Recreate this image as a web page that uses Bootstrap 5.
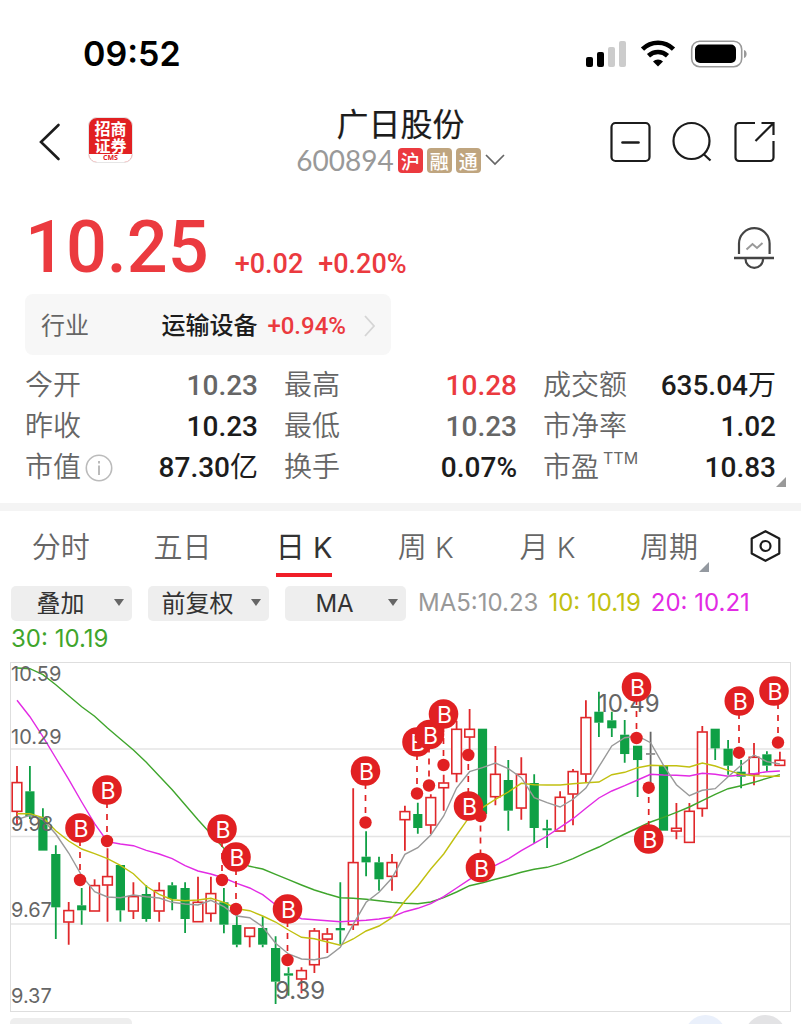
<!DOCTYPE html>
<html lang="zh-CN">
<head>
<meta charset="utf-8">
<meta name="viewport" content="width=device-width, initial-scale=1">
<title>广日股份 600894</title>
<link href="https://cdn.jsdelivr.net/npm/bootstrap@5.3.0/dist/css/bootstrap.min.css" rel="stylesheet">
<style>
:root { --up: #eb3a3f; --ink: #1c1c1c; --dim: #666; --brand: #e12022; }
body { font-family: Roboto, "Noto Sans CJK SC", sans-serif; color: var(--ink); background: #fff; }
svg { display: block; }
.ui { font-family: Inter, "Noto Sans CJK SC", sans-serif; }
.up { color: var(--up); }
.dim { color: var(--dim); }
.icon-btn { border: 0; background: none; padding: 0; color: var(--ink); }

.status { padding: 34px 54px 0 83px; height: 104px; }
.status-icons { height: 40px; }
.clock { font-size: 34px; line-height: 40px; font-weight: 600; color: #000; }

.topbar { display: grid; grid-template-columns: 1fr auto 1fr; padding: 0 26px 0 38px; height: 76px; }
.topbar-title { margin-right: 12px; }
.broker { width: 45px; height: 46px; margin: -4px 0 0 2px; border-radius: 9px; background: var(--brand); border: 1px solid #e6e6e6; overflow: hidden; color: #fff; }
.broker-name { font: 700 16px/17px "Noto Sans CJK SC", sans-serif; padding-top: 2px; }
.broker-code { background: #fff; color: var(--brand); font: 700 7px/8px "Open Sans", sans-serif; }
.stock-name { font: 400 32px/36px "Noto Sans CJK SC", sans-serif; -webkit-text-stroke: .2px; }
.stock-code { font: 400 28px/40px Lato, sans-serif; color: #999; }
.tag { width: 25px; height: 25px; border-radius: 4px; font: 500 19px/25px "Noto Sans CJK SC", sans-serif; color: #fff; background: #bfa57f; text-align: center; }
.tag-hu { background: var(--up); }
.tools { gap: 21px; }

.quote { padding: 22px 26px 0 25px; height: 114px; }
.price { font-size: 72px; line-height: 90px; font-weight: 500; }
.change { font-size: 27px; line-height: 36px; font-weight: 500; margin: 32px 0 0 26px; gap: 15px; }
.industry { width: 366px; height: 61px; margin-left: 25px; padding: 2px 15px 0 16px; border-radius: 8px; background: #f7f7f7; font-size: 24px; color: inherit; }
.industry-name { font-weight: 500; }
.industry-rate { font-weight: 500; margin: 0 18px 0 10px; }

.stats { display: grid; grid-template-columns: repeat(3, 1fr); column-gap: 26px; padding: 10px 25px 15px; font-size: 28px; line-height: 41px; }
.stats dt { font-weight: 350; color: var(--dim); }
.stats dd { margin: 0; font-weight: 500; }
.stats dd i { font-style: normal; font-weight: 400; }
.stats sup { font: 400 16px/20px Inter, sans-serif; top: -13px; margin-left: 4px; }
.corner { width: 0; height: 0; border-left: 10px solid transparent; border-bottom: 10px solid #999; }
.stats-more { position: absolute; right: 15px; bottom: 16px; }
.divider { height: 8px; background: #f4f4f4; }

.periods { height: 66px; font-size: 29px; }
.periods a { color: var(--dim); text-decoration: none; line-height: 73px; white-space: nowrap; font-weight: 350; }
.periods a.active { color: #333; font-weight: 400; }
.periods a.active span { border-bottom: 4px solid #f01e28; }
.periods span { display: block; height: 66px; }
.period-more { position: absolute; right: -11px; bottom: 5px; border-bottom-color: #9499a0; }
.gear { padding: 3px 20px 0; }

.legend { padding: 8px 11px 0; font-size: 24px; font-weight: 400; line-height: 36px; }
.pick { appearance: none; border: 0; border-radius: 5px; width: 121px; height: 35px; margin-right: 16px; padding: 0 34px 0 12px; color: #333; font-size: 24px; line-height: 35px; text-align: center; text-align-last: center;
  background: #eee url("data:image/svg+xml,%3Csvg xmlns='http://www.w3.org/2000/svg' width='10' height='8'%3E%3Cpath fill='%23666' d='M0 0h10L5 7z'/%3E%3C/svg%3E") no-repeat right 8px center; }
.ma { margin-right: 10px; }
.ma5 { color: #999; margin-left: -4px; } .ma10 { color: #c1c010; } .ma20 { color: #e22be4; } .ma30 { color: #3fa52c; }

.chart { padding: 5px 10px 0; }
.chart svg { width: 100%; height: auto; overflow: visible; }
.axis { fill: var(--dim); font: 400 20px Inter, sans-serif; }
.extreme { fill: var(--dim); font: 400 24px Inter, sans-serif; }
.pin { fill: #fff; font: 400 23px Inter, sans-serif; text-anchor: middle; }
.next { padding: 6px 15px 0 10px; height: 48px; }
.next-tab { width: 122px; height: 35px; border-radius: 5px; background: #eee; }
.round { width: 41px; height: 41px; border-radius: 50%; margin-top: -3px; background: #e3e3e5; }
.round-blue { background: #eaf0fb; margin-right: 19px; }
</style>
</head>
<body>
<div class="vh-100 overflow-hidden">
  <div class="status ui d-flex justify-content-between">
    <div class="clock">09:52</div>
    <div class="status-icons d-flex align-items-center">
      <svg width="162" height="28" viewBox="0 0 162 28" aria-hidden="true">
        <rect x="1" y="17" width="7" height="10" rx="2"/><rect x="12" y="12" width="7" height="15" rx="2"/>
        <rect x="23" y="7" width="7" height="20" rx="2" fill="#ccc"/><rect x="34" y="1" width="7" height="26" rx="2" fill="#ccc"/>
        <g fill="none" stroke="#000" stroke-width="4.6"><path d="M57.500 9.200a22 22 0 0 1 31 0"/><path d="M63.500 15.700a14 14 0 0 1 19 0"/></g>
        <path d="M73 26.500l-5-5a7 7 0 0 1 10 0z"/>
        <rect x="106.700" y="1.200" width="50" height="25.500" rx="8" fill="none" stroke="#999" stroke-width="1.600"/>
        <rect x="110" y="4.500" width="41" height="18.500" rx="5"/><path d="M159 10c3.500 1 3.500 7 0 8z" fill="#999"/>
      </svg>
    </div>
  </div>

  <header class="topbar align-items-center">
    <div class="d-flex align-items-center">
      <button class="icon-btn me-4" aria-label="返回"><svg width="24" height="40" viewBox="0 0 24 40" fill="none" stroke="currentColor" stroke-width="2.600" stroke-linecap="round"><path d="M20.500 3L3 20l17.500 17"/></svg></button>
      <div class="broker d-flex flex-column justify-content-between text-center"><div class="broker-name">招商<br>证券</div><div class="broker-code">CMS</div></div>
    </div>
    <div class="topbar-title text-center">
      <div class="stock-name">广日股份</div>
      <div class="d-flex align-items-center">
        <span class="stock-code me-1">600894</span>
        <span class="tag tag-hu me-1">沪</span><span class="tag me-1">融</span><span class="tag">通</span>
        <button class="icon-btn ms-1" aria-label="展开"><svg width="20" height="14" viewBox="0 0 20 14" fill="none" stroke="#666" stroke-width="1.700"><path d="M1 2l9 9 9-9"/></svg></button>
      </div>
    </div>
    <div class="tools d-flex justify-content-end">
      <button class="icon-btn" aria-label="移除自选"><svg width="41" height="42" viewBox="0 0 41 42" fill="none" stroke="currentColor" stroke-width="2.200"><rect x="1.500" y="2" width="38" height="38" rx="4"/><path d="M12.500 21.500h16" stroke-width="2.600" stroke-linecap="round"/></svg></button>
      <button class="icon-btn" aria-label="搜索"><svg width="41" height="42" viewBox="0 0 41 42" fill="none" stroke="currentColor" stroke-width="2.200"><circle cx="19.500" cy="20" r="18"/><path d="M31.500 33l7 6.500"/></svg></button>
      <button class="icon-btn" aria-label="分享"><svg width="41" height="42" viewBox="0 0 41 42" fill="none" stroke="currentColor" stroke-width="2.200"><path d="M21 2H5a3.500 3.500 0 0 0-3.500 3.500v31A3.500 3.500 0 0 0 5 40h31a3.500 3.500 0 0 0 3.500-3.500V20M27.500 2h12v12M39 2.500L21.500 20"/></svg></button>
    </div>
  </header>

  <section class="quote d-flex align-items-center up">
    <div class="price">10.25</div>
    <div class="change d-flex"><span>+0.02</span><span>+0.20%</span></div>
    <button class="icon-btn ms-auto" aria-label="股价提醒"><svg width="42" height="44" viewBox="0 0 42 44" fill="none" stroke="#444" stroke-width="2.200"><path d="M6 28V17.500a15.300 15.300 0 0 1 30.600 0V28"/><path d="M1 32h40" stroke-width="2.600"/><path d="M12.500 33a8.800 8.800 0 0 0 17.600 0"/><path d="M13.500 23.500l6-5.500 4.500 4 5.500-5" stroke="#999" stroke-width="2"/></svg></button>
  </section>

  <a class="industry d-flex align-items-center text-decoration-none" href="#"><span class="dim">行业</span><span class="industry-name ms-auto">运输设备</span><span class="industry-rate up">+0.94%</span>
    <svg width="12" height="22" viewBox="0 0 12 22" fill="none" stroke="#d5d5d5" stroke-width="1.800"><path d="M1 1l9 10-9 10"/></svg></a>

  <div class="position-relative">
    <dl class="stats mb-0">
      <div class="d-flex justify-content-between"><dt>今开</dt><dd class="dim">10.23</dd></div>
      <div class="d-flex justify-content-between"><dt>最高</dt><dd class="up">10.28</dd></div>
      <div class="d-flex justify-content-between"><dt>成交额</dt><dd>635.04<i>万</i></dd></div>
      <div class="d-flex justify-content-between"><dt>昨收</dt><dd>10.23</dd></div>
      <div class="d-flex justify-content-between"><dt>最低</dt><dd class="dim">10.23</dd></div>
      <div class="d-flex justify-content-between"><dt>市净率</dt><dd>1.02</dd></div>
      <div class="d-flex justify-content-between"><dt class="d-flex align-items-center">市值<svg class="ms-1" width="28" height="28" viewBox="0 0 28 28" fill="none" stroke="#bbb" stroke-width="1.600"><circle cx="14" cy="14" r="12.700"/><path d="M14 11.500V21M14 7v2.500" stroke-width="2"/></svg></dt><dd>87.30<i>亿</i></dd></div>
      <div class="d-flex justify-content-between"><dt>换手</dt><dd>0.07%</dd></div>
      <div class="d-flex justify-content-between"><dt>市盈<sup>TTM</sup></dt><dd>10.83</dd></div>
    </dl>
    <i class="corner stats-more"></i>
  </div>
  <div class="divider"></div>

  <nav class="periods ui d-flex align-items-center">
    <div class="d-flex flex-grow-1">
      <a class="col-2 d-flex justify-content-center" href="#"><span>分时</span></a>
      <a class="col-2 d-flex justify-content-center" href="#"><span>五日</span></a>
      <a class="col-2 d-flex justify-content-center active" href="#" aria-current="page"><span>日 K</span></a>
      <a class="col-2 d-flex justify-content-center" href="#"><span>周 K</span></a>
      <a class="col-2 d-flex justify-content-center" href="#"><span>月 K</span></a>
      <a class="col-2 d-flex justify-content-center" href="#"><span class="position-relative">周期<i class="corner period-more"></i></span></a>
    </div>
    <button class="icon-btn gear" aria-label="图表设置"><svg width="31" height="32" viewBox="0 0 31 32" fill="none" stroke="currentColor" stroke-width="2.200" stroke-linejoin="round"><path d="M15.500 1.200l13.800 7.300v15L15.500 30.800 1.700 23.500v-15z"/><circle cx="15.500" cy="16" r="5"/></svg></button>
  </nav>

  <div class="legend ui d-flex flex-wrap align-items-center">
    <select class="pick" aria-label="叠加"><option>叠加</option></select>
    <select class="pick" aria-label="复权"><option>前复权</option></select>
    <select class="pick" aria-label="指标"><option>MA</option></select>
    <span class="ma ma5">MA5:10.23</span><span class="ma ma10">10: 10.19</span><span class="ma ma20">20: 10.21</span><span class="ma ma30">30: 10.19</span>
  </div>

  <div class="chart"><svg id="kline" viewBox="0 0 781 350" role="img" aria-label="日K线图"></svg></div>
  <div class="next d-flex">
    <div class="next-tab me-auto"></div><div class="round round-blue"></div><div class="round"></div>
  </div>
</div>

<script src="https://cdn.jsdelivr.net/npm/bootstrap@5.3.0/dist/js/bootstrap.bundle.min.js"></script>
<script>
// Candles as [high, body top, body bottom, low, kind], in thirds of a chart unit
const candles = [
[336,385,473,510,'r'],[336,412,487,495,'g'],[463,490,590,590,'g'],[574,600,760,855,'g'],[744,769,805,872,'r'],[702,754,769,812,'g'],
[676,694,772,772,'r'],[583,667,694,803,'r'],[633,633,769,803,'g'],[685,727,772,795,'r'],[694,720,795,803,'g'],[685,709,772,803,'r'],
[685,694,735,769,'g'],[685,702,795,837,'g'],[668,744,804,804,'r'],[668,718,779,803,'r'],[702,745,812,838,'g'],[780,813,872,880,'g'],
[821,821,848,880,'r'],[787,822,872,880,'g'],[847,882,983,1050,'g'],[940,958,965,1025,'g'],[940,949,976,1018,'r'],[822,830,933,957,'r'],
[822,839,856,897,'r'],[685,822,829,872,'g'],[403,625,813,828,'r'],[532,608,625,667,'g'],[608,625,676,710,'g'],[600,625,668,710,'r'],
[455,472,498,590,'r'],[446,480,522,539,'g'],[421,430,514,540,'r'],[362,386,402,470,'r'],[200,225,360,385,'r'],[165,225,250,290,'r'],
[224,224,480,480,'g'],[276,360,429,454,'r'],[318,378,470,530,'g'],[310,360,463,497,'r'],[361,387,522,567,'g'],[497,523,529,582,'g'],
[412,429,532,532,'r'],[345,352,421,514,'r'],[139,190,361,385,'r'],[113,173,206,249,'g'],[173,199,223,249,'g'],[198,242,300,326,'g'],
[275,275,318,429,'g'],[233,298,302,390,'n'],[335,335,530,530,'g'],[447,522,532,556,'r'],[447,471,566,566,'r'],[216,233,464,488,'r'],
[224,224,283,318,'g'],[258,284,335,362,'g'],[318,353,368,403,'g'],[267,309,361,394,'r'],[292,301,335,352,'g'],[293,318,335,335,'r']];
const averages = {
'#3fa52c':[42,44,62,92,125,158,187,222,255,288,325,366,407,452,497,540,583,622,637,645,661,677,693,708,720,731,733,736,740,745,748,749,744,731,714,695,686,676,666,655,646,640,629,614,596,579,559,540,522,504,490,475,459,440,421,404,395,385,373,362],
'#e22be4':[139,188,248,312,376,444,509,563,570,575,589,600,614,635,651,660,672,688,702,722,752,778,794,797,800,803,801,799,795,789,773,763,749,728,702,676,655,634,615,590,568,546,520,494,463,432,411,395,378,361,363,364,366,358,361,367,363,359,353,351],
'#c1c010':[479,479,491,530,561,585,599,614,634,659,697,721,737,740,738,733,745,764,770,786,804,828,850,854,864,874,855,831,816,791,741,696,645,600,543,488,461,436,414,388,392,393,393,389,386,384,362,355,341,334,335,335,339,327,336,349,361,365,367,367],
'#999':[497,484,497,540,597,665,713,729,731,723,728,732,745,750,753,739,758,786,791,818,868,900,915,917,910,880,811,745,715,672,601,581,543,486,402,353,341,327,344,371,431,446,459,436,402,338,276,251,246,266,334,392,425,409,404,368,334,303,323,330]};
// Buy marks: badge x, y, then dot x, y
const buys = [[70,166,70,218],[97,128,97,179],[212,167,212,218],[226,195,226,247],[277.5,247,277.5,298],[355.5,109,355.5,160.5],
[407,80,407,131.5],[419.5,72.5,419,123.500],[433.5,52,433.5,103],[470.5,205.5,470.5,154],[458.5,144,458.3,93],
[626.5,25,626.5,76],[638.7,177,638.7,125.700],[729.3,39,729,90.7],[764,29,768,80.5]];
const X = i => (7 + 12.93 * i).toFixed(1), Y = v => ((v - 24) / 3).toFixed(1);
const ink = { r: '#e0282b', g: '#0fa045', n: '#666' };
let s = '';
for (const y of [87, 174.5, 262]) s += `<path d="M0 ${y}H781" stroke="#e4e4e4" stroke-width="1.300"/>`;
s += '<rect x=".5" y=".5" width="780" height="349" fill="none" stroke="#dedede"/>';
candles.forEach(([h, t, b, l, k], i) => {
  const x = X(i), c = ink[k];
  s += `<path d="M${x} ${Y(h)}V${Y(t)}M${x} ${Y(b)}V${Y(l)}" stroke="${c}" stroke-width="1.800"/>`;
  s += k === 'r'
    ? `<rect x="${x - 4.8}" y="${+Y(t) + .3}" width="9.600" height="${Math.max(1.5, (b - t) / 3 - .6)}" fill="#fff" stroke="${c}" stroke-width="1.600"/>`
    : `<rect x="${x - 4.6}" y="${Y(t)}" width="9.200" height="${(b - t) / 3}" fill="${c}"/>`;
});
for (const [c, v] of Object.entries(averages))
  s += `<polyline fill="none" stroke="${c}" stroke-width="1.400" points="${v.map((n, i) => X(i) + ',' + Y(n)).join(' ')}"/>`;
[['10.59', 19], ['10.29', 82], ['9.98', 169], ['9.67', 255], ['9.37', 341]].forEach(([t, y]) => s += `<text class="axis" x="1" y="${y}">${t}</text>`);
s += '<text class="extreme" x="588" y="50">10.49</text><text class="extreme" x="265" y="337">9.39</text>';
for (const [x, y, dx, dy] of buys) {
  const d = Math.sign(dy - y);
  s += `<path d="M${dx} ${y + 14 * d}V${dy}" stroke="#e12022" stroke-width="1.700" stroke-dasharray="6 6" stroke-dashoffset="2"/>
    <circle cx="${dx}" cy="${dy}" r="6.200" fill="#e12022"/><circle cx="${x}" cy="${y}" r="14.800" fill="#e12022"/><text class="pin" x="${x + 1}" y="${y + 9}">B</text>`;
}
document.getElementById('kline').innerHTML = s;
</script>
</body>
</html>
